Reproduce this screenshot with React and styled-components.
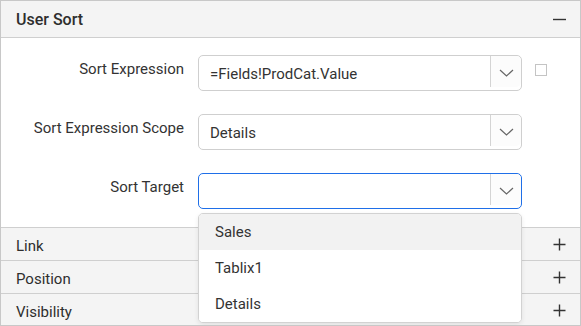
import React from "react";
import styled, { createGlobalStyle } from "styled-components";

const Global = createGlobalStyle`
  html, body { margin: 0; padding: 0; background: #fff; }
  body { font-family: Roboto, "Noto Sans", sans-serif; color: #333; }
  * { box-sizing: border-box; }
`;

const Panel = styled.div`
  width: 581px;
  height: 326px;
  border: 1px solid #c8c8c8;
  display: flex;
  flex-direction: column;
  overflow: hidden;
`;

const Header = styled.div`
  display: flex;
  align-items: center;
  justify-content: space-between;
  padding: 0 14px 0 15px;
  background: #f4f4f4;
  border-top: ${({ $first }) => ($first ? "none" : "1px solid #cfcfcf")};
  border-bottom: ${({ $open }) => ($open ? "1px solid #cfcfcf" : "none")};
  height: ${({ $open }) => ($open ? "37px" : "33px")};
  flex: 0 0 ${({ $open }) => ($open ? "37px" : "33px")};
`;

const Title = styled.div`
  font-size: ${({ $open }) => ($open ? "16px" : "15px")};
  font-weight: ${({ $open }) => ($open ? 500 : 400)};
  color: #2e2e2e;
  padding-top: ${({ $open }) => ($open ? "0" : "3px")};
`;

const Body = styled.div`
  display: flex;
  flex-direction: column;
  gap: 23px;
  padding: 17px 0 18px;
  background: #fff;
`;

const Row = styled.div`
  display: flex;
  align-items: flex-start;
`;

const Label = styled.div`
  width: 183px;
  text-align: right;
  font-size: 15px;
  line-height: 17px;
  padding-top: 6px;
  color: #333;
`;

const Field = styled.div`
  position: relative;
  margin-left: 14px;
  width: 324px;
  height: 36px;
  display: flex;
  border: 1px solid ${({ $focus }) => ($focus ? "#1f6fe8" : "#cfcfcf")};
  border-radius: 5px;
  background: #fff;
`;

const Value = styled.div`
  flex: 1;
  display: flex;
  align-items: center;
  padding: 1px 0 0 11px;
  font-size: 15px;
  color: #333;
`;

const DropButton = styled.div`
  width: 31px;
  display: flex;
  align-items: center;
  justify-content: center;
  border-left: 1px solid #d4d4d4;
  margin: 0 0 3px;
  padding-top: 3px;
  background: #fcfcfc;
  border-radius: 0 5px 5px 0;
`;

const Check = styled.div`
  width: 12px;
  height: 12px;
  margin: 9px 0 0 13px;
  border: 1px solid #c4c4c4;
  background: #fff;
`;

const Popup = styled.div`
  position: absolute;
  left: -1px;
  top: calc(100% + 5px);
  width: 324px;
  background: #fff;
  border: 1px solid #d2d2d2;
  border-radius: 5px;
  box-shadow: 0 2px 5px rgba(0, 0, 0, 0.08);
  overflow: hidden;
  z-index: 10;
`;

const Item = styled.div`
  height: 36px;
  display: flex;
  align-items: center;
  padding-left: 16px;
  font-size: 15px;
  color: #333;
  background: ${({ $active }) => ($active ? "#f2f2f2" : "#fff")};
`;

const Chevron = () => (
  <svg width="15" height="8" viewBox="0 0 15 8">
    <polyline points="1,1 7.5,7 14,1" fill="none" stroke="#666" strokeWidth="1.2" />
  </svg>
);

const Plus = () => (
  <svg width="13" height="13" viewBox="0 0 13 13">
    <path d="M6.5 0.5v12M0.5 6.5h12" stroke="#333" strokeWidth="1.4" />
  </svg>
);

const Minus = () => (
  <svg width="13" height="13" viewBox="0 0 13 13">
    <path d="M0 6.5h13" stroke="#333" strokeWidth="1.4" />
  </svg>
);

const Select = ({ value, focus, children }) => (
  <Field $focus={focus}>
    <Value>{value}</Value>
    <DropButton>
      <Chevron />
    </DropButton>
    {children}
  </Field>
);

const targets = ["Sales", "Tablix1", "Details"];

export default function App() {
  return (
    <>
      <Global />
      <Panel>
        <Header $first $open>
          <Title $open>User Sort</Title>
          <Minus />
        </Header>
        <Body>
          <Row>
            <Label>Sort Expression</Label>
            <Select value="=Fields!ProdCat.Value" />
            <Check />
          </Row>
          <Row>
            <Label>Sort Expression Scope</Label>
            <Select value="Details" />
          </Row>
          <Row>
            <Label>Sort Target</Label>
            <Select value="" focus>
              <Popup>
                {targets.map((t, i) => (
                  <Item key={t} $active={i === 0}>
                    {t}
                  </Item>
                ))}
              </Popup>
            </Select>
          </Row>
        </Body>
        {["Link", "Position", "Visibility"].map((s) => (
          <Header key={s}>
            <Title>{s}</Title>
            <Plus />
          </Header>
        ))}
      </Panel>
    </>
  );
}
